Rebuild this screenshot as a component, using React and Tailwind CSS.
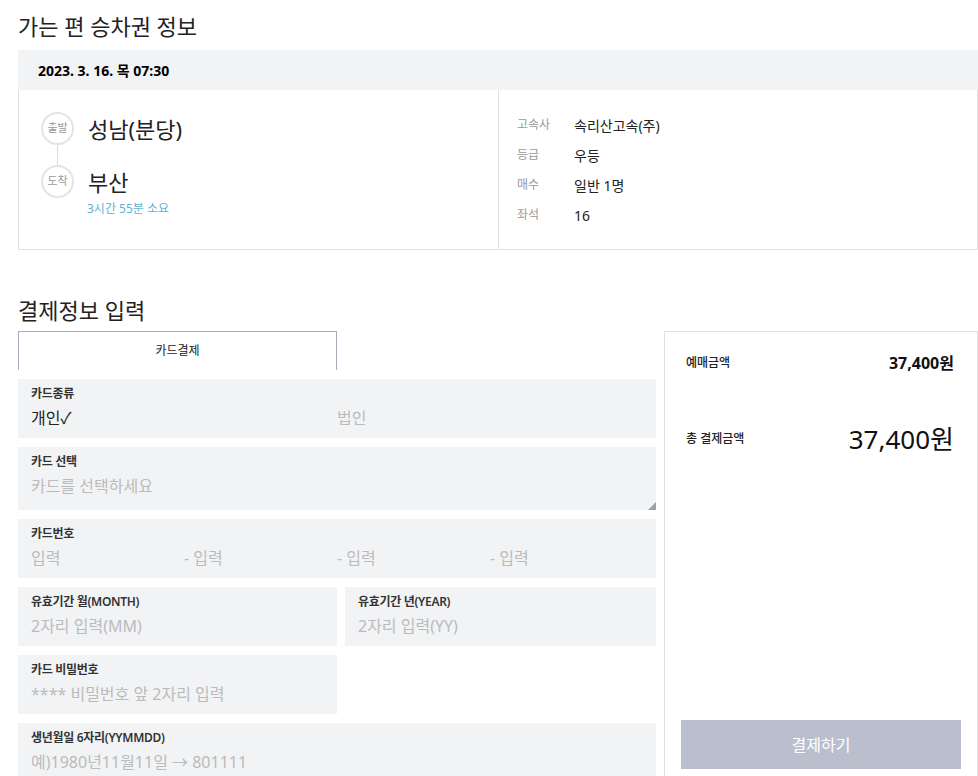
const FONT = "font-['Noto_Sans','Noto_Sans_CJK_KR',sans-serif]";

function Field({ label, children, className = "" }) {
  return (
    <div className={`bg-[#f2f3f5] px-[13px] pt-[7px] ${className}`}>
      <div className="text-[12px] leading-[16px] font-semibold text-[#333] tracking-[-0.3px]">{label}</div>
      <div className="mt-[4px] text-[16px] leading-[24px] text-[#bbbbbb]">{children}</div>
    </div>
  );
}

function Stop({ tag, name }) {
  return (
    <div className="flex items-center">
      <div className="w-[33px] h-[33px] rounded-full border-2 border-[#e4e4e4] bg-white flex items-center justify-center text-[11px] text-[#999] shrink-0">
        {tag}
      </div>
      <div className="ml-[14px] text-[22px] leading-[28px] text-[#222]">{name}</div>
    </div>
  );
}

export default function App() {
  const info = [
    ["고속사", "속리산고속(주)"],
    ["등급", "우등"],
    ["매수", "일반 1명"],
    ["좌석", "16"],
  ];

  return (
    <div className={`${FONT} bg-white w-[978px] h-[776px] overflow-hidden pl-[18px] text-[#222]`}>
      <div className="h-[50px] flex items-center pt-[3px] text-[22px] text-[#222]">가는 편 승차권 정보</div>

      <div className="w-[960px]">
        <div className="h-[40px] bg-[#f2f3f5] flex items-center pl-[20px] text-[14px] font-bold text-black">
          2023. 3. 16. 목 07:30
        </div>
        <div className="h-[160px] border border-t-0 border-[#e1e1e1] flex">
          <div className="w-[480px] border-r border-[#e1e1e1] pl-[22px] pt-[22px]">
            <Stop tag="출발" name="성남(분당)" />
            <div className="ml-[16px] w-px h-[20px] bg-[#dddddd]" />
            <Stop tag="도착" name="부산" />
            <div className="ml-[46px] mt-[3px] text-[12px] leading-[16px] text-[#5fb0d6]">3시간 55분 소요</div>
          </div>
          <div className="flex-1 pl-[18px] pt-[20px]">
            {info.map(([k, v]) => (
              <div key={k} className="flex items-center h-[30px]">
                <div className="w-[57px] text-[12px] text-[#999]">{k}</div>
                <div className="text-[14px] text-[#222]">{v}</div>
              </div>
            ))}
          </div>
        </div>
      </div>

      <div className="h-[81px] flex items-end pb-[7px] text-[22px] leading-[28px] text-[#222]">결제정보 입력</div>

      <div className="flex gap-[8px] w-[960px]">
        <div className="w-[638px] flex flex-col gap-[9px]">
          <div className="w-[319px] h-[39px] border border-b-0 border-[#a8acb8] flex items-center justify-center text-[12px] text-[#222]">
            카드결제
          </div>

          <Field label="카드종류" className="h-[59px]">
            <div className="grid grid-cols-2">
              <span className="text-[#222]">개인✓</span>
              <span>법인</span>
            </div>
          </Field>

          <div className="relative">
            <Field label="카드 선택" className="h-[63px]">카드를 선택하세요</Field>
            <svg className="absolute right-0 bottom-0" width="8" height="8" viewBox="0 0 8 8">
              <path d="M8 0 L8 8 L0 8 Z" fill="#9aa0ad" />
            </svg>
          </div>

          <Field label="카드번호" className="h-[59px]">
            <div className="grid grid-cols-4">
              <span>입력</span>
              <span>- 입력</span>
              <span>- 입력</span>
              <span>- 입력</span>
            </div>
          </Field>

          <div className="flex gap-[8px]">
            <Field label="유효기간 월(MONTH)" className="w-[319px] h-[59px]">2자리 입력(MM)</Field>
            <Field label="유효기간 년(YEAR)" className="flex-1 h-[59px]">2자리 입력(YY)</Field>
          </div>

          <Field label="카드 비밀번호" className="w-[319px] h-[59px]">**** 비밀번호 앞 2자리 입력</Field>

          <Field label="생년월일 6자리(YYMMDD)" className="h-[59px]">예)1980년11월11일 → 801111</Field>
        </div>

        <div className="flex-1 h-[460px] border border-[#e1e1e1] px-[16px]">
          <div className="flex items-center justify-between pt-[19px] px-[5px] pr-[7px]">
            <span className="text-[12px] leading-[24px] font-medium text-[#222]">예매금액</span>
            <span className="text-[16px] leading-[24px] font-bold text-[#111]">37,400원</span>
          </div>
          <div className="mt-[46px] flex items-center justify-between px-[5px] pr-[7px]">
            <span className="text-[12px] leading-[36px] font-medium text-[#222]">총 결제금액</span>
            <span className="text-[26px] leading-[36px] text-[#111]">37,400원</span>
          </div>
          <div className="mt-[263px] h-[49px] bg-[#b9bfcd] flex items-center justify-center text-[16px] text-white">
            결제하기
          </div>
        </div>
      </div>
    </div>
  );
}
